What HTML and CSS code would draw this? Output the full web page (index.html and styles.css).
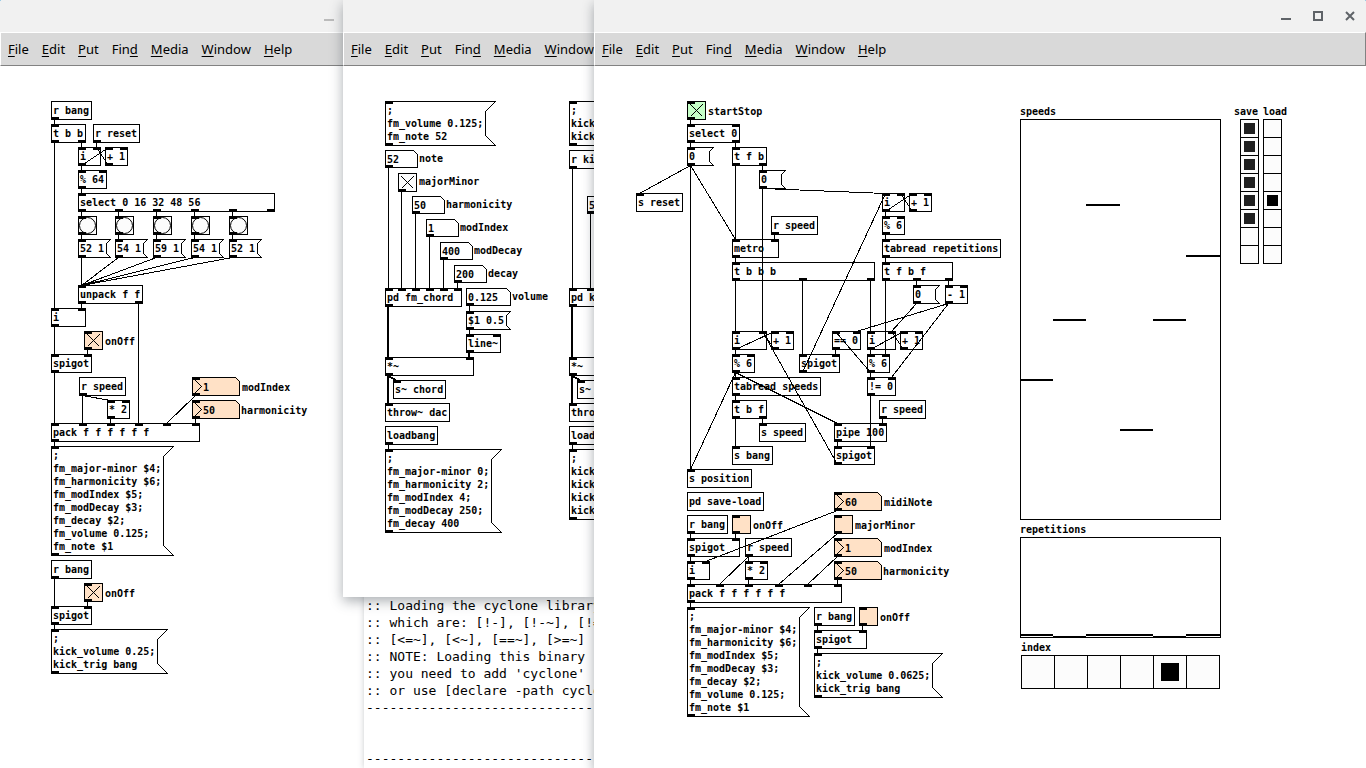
FILE: index.html
```html
<!DOCTYPE html>
<html lang="en">
<head>
<meta charset="utf-8">
<title>Pd patches</title>
<link rel="stylesheet" href="styles.css">
</head>
<body>
<main class="desktop">
  <section class="window window-bass" aria-label="Bass patch">
    <header class="titlebar">
      <button class="win-btn" aria-label="Minimize"><svg viewBox="0 0 32 32"><path d="M11 19h10v2H11z"/></svg></button>
      <span class="win-gap"></span>
    </header>
    <nav class="menubar">
      <button><u>F</u>ile</button><button><u>E</u>dit</button><button><u>P</u>ut</button><button>Fin<u>d</u></button><button><u>M</u>edia</button><button><u>W</u>indow</button><button><u>H</u>elp</button>
    </nav>
    <div class="canvas" data-patch="bass"></div>
  </section>

  <section class="window window-console" aria-label="Pd console">
    <pre class="log">:: Loading the cyclone library
:: which are: [!-], [!-~], [!=~]
:: [&lt;=~], [&lt;~], [==~], [&gt;=~]
:: NOTE: Loading this binary
:: you need to add 'cyclone'
:: or use [declare -path cyclone]
---------------------------------


---------------------------------</pre>
  </section>

  <section class="window window-voices" aria-label="Voices patch">
    <header class="titlebar"></header>
    <nav class="menubar">
      <button><u>F</u>ile</button><button><u>E</u>dit</button><button><u>P</u>ut</button><button>Fin<u>d</u></button><button><u>M</u>edia</button><button><u>W</u>indow</button>
    </nav>
    <div class="canvas" data-patch="voices"></div>
  </section>

  <section class="window window-main" aria-label="Sequencer patch">
    <header class="titlebar">
      <button class="win-btn" aria-label="Minimize"><svg viewBox="0 0 32 32"><path d="M11 18h10v2H11z"/></svg></button>
      <button class="win-btn" aria-label="Maximize"><svg viewBox="0 0 32 32"><path d="M13 11h10v10H13zM15 13v6h6v-6z" transform="translate(-2)" fill-rule="evenodd"/></svg></button>
      <button class="win-btn" aria-label="Close"><svg viewBox="0 0 32 32"><path class="cross" d="M12 12l8 8M20 12l-8 8"/></svg></button>
    </header>
    <nav class="menubar">
      <button><u>F</u>ile</button><button><u>E</u>dit</button><button><u>P</u>ut</button><button>Fin<u>d</u></button><button><u>M</u>edia</button><button><u>W</u>indow</button><button><u>H</u>elp</button>
    </nav>
    <div class="canvas" data-patch="main"></div>
  </section>
</main>
<script src="patch.js"></script>
</body>
</html>
```

FILE: styles.css
```css
* { box-sizing: border-box; }

body {
  margin: 0;
  background: #2f9fd8;
  font-family: "Noto Sans", sans-serif;
  font-size: 13px;
  color: #000;
}

button, input {
  margin: 0;
  padding: 0;
  border: 0;
  border-radius: 0;
  background: none;
  color: inherit;
  font: inherit;
  appearance: none;
}

.desktop {
  position: relative;
  height: 100vh;
  overflow: hidden;
}

.window {
  position: absolute;
  top: 0;
  bottom: 0;
  display: flex;
  flex-direction: column;
  background: #fff;
  box-shadow: 0 4px 12px rgba(40, 50, 60, 0.4);
}

.window-bass { left: 0; width: 409px; border-top-left-radius: 2px; }
.window-console { left: 364px; width: 230px; top: 590px; box-shadow: 0 0 6px rgba(40, 50, 60, 0.25); }
.window-voices { left: 343px; width: 251px; bottom: auto; height: 597px; }
.window-main { left: 594px; right: 0; border-top-right-radius: 2px; }

.titlebar {
  display: flex;
  justify-content: flex-end;
  height: 32px;
  flex: none;
  background: #f1f1f1;
  border-radius: inherit;
}

.win-btn { width: 32px; height: 32px; }
.win-btn svg { display: block; fill: #5f6368; }
.win-btn .cross { fill: none; stroke: #5f6368; stroke-width: 2; }
.win-gap { width: 64px; }
.window-bass .win-btn svg { fill: #bbb; }

.menubar {
  display: flex;
  align-items: center;
  gap: 13px;
  height: 34px;
  flex: none;
  padding-left: 7px;
  overflow: hidden;
  background: #d9d9d9;
  border: 1px solid #fff;
  border-right-color: #828282;
  border-bottom-color: #828282;
}

.window-voices .menubar { border-right: 0; }
.menubar button { flex: none; line-height: 18px; }
.menubar u { text-underline-offset: 2px; text-decoration-thickness: 1px; text-decoration-skip-ink: none; }

.log {
  margin: 0;
  padding: 7px 2px;
  font: 13px/17px "DejaVu Sans Mono", monospace;
  overflow: hidden;
}

.canvas {
  position: relative;
  flex: 1;
  overflow: hidden;
  font: bold 10px/13px "DejaVu Sans Mono", monospace;
}

.node { position: absolute; }
.box, .message { padding: 3px 2px; text-align: left; white-space: pre; }
.message { display: block; }
.atom { height: 18px; padding: 3px 2px 2px; }
.number { height: 19px; padding: 4px 2px 2px 11px; clip-path: polygon(0 0, calc(100% - 4px) 0, 100% 4px, 100% 100%, 0 100%); }
.toggle, .bang { width: 19px; height: 19px; background: #fcfcfc; }
.peach { background: #ffe1c6; }
.green { background: #c6ffc7; }
.caption { white-space: nowrap; }

.wires {
  position: absolute;
  inset: 0;
  width: 100%;
  height: 100%;
  pointer-events: none;
  fill: none;
  stroke: #000;
  shape-rendering: crispEdges;
}

.wires .solid { fill: #000; stroke: none; }
.wires .signal { stroke-width: 2; }
.wires .round { shape-rendering: auto; }

.radio { display: flex; border: 1px solid #000; }
.radio input { display: block; background: #fcfcfc; border: 0 solid #000; }
.radio-column { flex-direction: column; width: 19px; }
.radio-column input { height: 18px; padding: 3px; border-bottom-width: 1px; }
.radio-column input:last-child { height: 17px; border-bottom-width: 0; }
.radio-row { height: 34px; }
.radio-row input { width: 33px; padding: 7px; border-right-width: 1px; }
.radio-row input:last-child { width: 32px; border-right-width: 0; }
.radio input:checked::before { content: ""; display: block; background: #000; }
.radio-column input:checked::before { width: 11px; height: 11px; }
.radio-row input:checked::before { width: 18px; height: 18px; }
.radio input[type="checkbox"]:checked::before { background: #202020; }
```

FILE: patch.js
```js
// Node: [id, type, x, y, text, inlets, outlets, options]
// Cord: "from.outlet>to.inlet"; a leading "~" marks a signal cord.
const FM = ";\nfm_major-minor $4;\nfm_harmonicity $6;\nfm_modIndex $5;\nfm_modDecay $3;\nfm_decay $2;\nfm_volume 0.125;\nfm_note $1";

const patches = {
  bass: {
    origin: [0, 66],
    nodes: [
      ["rb", "box", 51, 101, "r bang", 0, 1],
      ["tbb", "box", 51, 124, "t b b", 1, 2],
      ["rr", "box", 93, 124, "r reset", 0, 1],
      ["i", "box", 78, 147, "i", 2, 1, { w: 23 }],
      ["inc", "box", 105, 147, "+ 1", 2, 1],
      ["mod", "box", 78, 170, "% 64", 2, 1],
      ["sel", "box", 78, 193, "select 0 16 32 48 56", 1, 6, { w: 197 }],
      ["b0", "bang", 78, 216, "", 1, 1],
      ["b1", "bang", 115, 216, "", 1, 1],
      ["b2", "bang", 153, 216, "", 1, 1],
      ["b3", "bang", 191, 216, "", 1, 1],
      ["b4", "bang", 229, 216, "", 1, 1],
      ["m0", "message", 78, 239, "52 1", 1, 1],
      ["m1", "message", 115, 239, "54 1", 1, 1],
      ["m2", "message", 153, 239, "59 1", 1, 1],
      ["m3", "message", 191, 239, "54 1", 1, 1],
      ["m4", "message", 229, 239, "52 1", 1, 1],
      ["un", "box", 78, 285, "unpack f f", 1, 2],
      ["j", "box", 51, 308, "i", 2, 1, { w: 35 }],
      ["on", "toggle", 84, 331, "", 1, 1, { on: true, fill: "peach", label: "onOff", lx: 105 }],
      ["sp", "box", 51, 354, "spigot", 2, 1],
      ["rs", "box", 79, 377, "r speed", 0, 1],
      ["dbl", "box", 107, 400, "* 2", 2, 1],
      ["mi", "number", 192, 377, "1", 1, 1, { label: "modIndex", lx: 242 }],
      ["ha", "number", 192, 400, "50", 1, 1, { label: "harmonicity", lx: 241 }],
      ["pk", "box", 51, 423, "pack f f f f f f", 6, 1, { w: 149 }],
      ["fm", "message", 51, 446, FM, 1, 1],
      ["rb2", "box", 51, 560, "r bang", 0, 1],
      ["on2", "toggle", 84, 583, "", 1, 1, { on: true, fill: "peach", label: "onOff", lx: 105 }],
      ["sp2", "box", 51, 606, "spigot", 2, 1],
      ["kick", "message", 51, 629, ";\nkick_volume 0.25;\nkick_trig bang", 1, 1]
    ],
    cords: "rb.0>tbb.0 tbb.0>j.0 tbb.1>i.0 rr.0>i.1 i.0>inc.0 inc.0>i.1 i.0>mod.0 mod.0>sel.0 sel.0>b0.0 sel.1>b1.0 sel.2>b2.0 sel.3>b3.0 sel.4>b4.0 b0.0>m0.0 b1.0>m1.0 b2.0>m2.0 b3.0>m3.0 b4.0>m4.0 m0.0>un.0 m1.0>un.0 m2.0>un.0 m3.0>un.0 m4.0>un.0 un.0>j.1 un.1>pk.3 j.0>sp.0 on.0>sp.1 sp.0>pk.0 rs.0>pk.1 rs.0>dbl.0 dbl.0>pk.2 mi.0>pk.4 ha.0>pk.5 pk.0>fm.0 rb2.0>sp2.0 on2.0>sp2.1 sp2.0>kick.0"
  },

  voices: {
    origin: [343, 66],
    nodes: [
      ["vol", "message", 385, 101, ";\nfm_volume 0.125;\nfm_note 52", 1, 1],
      ["n", "atom", 385, 150, "52", 0, 1, { label: "note", lx: 419 }],
      ["mm", "toggle", 398, 173, "", 0, 1, { on: true, label: "majorMinor", lx: 419, ly: 175 }],
      ["h", "atom", 412, 196, "50", 0, 1, { label: "harmonicity", lx: 446 }],
      ["mi", "atom", 426, 219, "1", 0, 1, { label: "modIndex", lx: 460 }],
      ["md", "atom", 440, 242, "400", 0, 1, { label: "modDecay", lx: 474 }],
      ["d", "atom", 454, 265, "200", 0, 1, { label: "decay", lx: 488 }],
      ["pd", "box", 385, 288, "pd fm_chord", 6, 1, { w: 77 }],
      ["v", "atom", 466, 288, "0.125", 0, 1, { w: 45, label: "volume", lx: 512 }],
      ["ramp", "message", 466, 311, "$1 0.5", 1, 1],
      ["line", "box", 466, 334, "line~", 2, 1],
      ["mul", "box", 385, 357, "*~", 2, 1, { w: 89 }],
      ["s", "box", 393, 380, "s~ chord", 1, 0],
      ["th", "box", 385, 403, "throw~ dac", 1, 0],
      ["lb", "box", 385, 426, "loadbang", 0, 1],
      ["init", "message", 385, 449, ";\nfm_major-minor 0;\nfm_harmonicity 2;\nfm_modIndex 4;\nfm_modDecay 250;\nfm_decay 400", 1, 1],
      ["kvol", "message", 569, 101, ";\nkick_volume 0.25;\nkick_trig bang", 1, 1],
      ["rk", "box", 569, 150, "r kick_trig", 0, 1],
      ["ka", "atom", 587, 196, "50", 0, 1],
      ["kpd", "box", 569, 288, "pd kick", 2, 1, { w: 26 }],
      ["kmul", "box", 569, 357, "*~", 2, 1, { w: 89 }],
      ["ks", "box", 577, 380, "s~ kick", 1, 0],
      ["kth", "box", 569, 403, "throw~ dac", 1, 0],
      ["klb", "box", 569, 426, "loadbang", 0, 1],
      ["kinit", "message", 569, 449, ";\nkick_freq 50;\nkick_decay 200;\nkick_click 1;\nkick_volume 1", 1, 1]
    ],
    cords: "n.0>pd.0 mm.0>pd.1 h.0>pd.2 mi.0>pd.3 md.0>pd.4 d.0>pd.5 v.0>ramp.0 ramp.0>line.0 ~pd.0>mul.0 ~line.0>mul.1 ~mul.0>s.0 ~mul.0>th.0 lb.0>init.0 rk.0>kpd.0 ka.0>kpd.1 ~kpd.0>kmul.0 ~kmul.0>ks.0 ~kmul.0>kth.0 klb.0>kinit.0"
  },

  main: {
    origin: [594, 66],
    nodes: [
      ["go", "toggle", 687, 101, "", 1, 1, { on: true, fill: "green", label: "startStop", lx: 708 }],
      ["sel", "box", 687, 124, "select 0", 2, 2],
      ["z0", "message", 687, 147, "0", 1, 1, { w: 23 }],
      ["tfb", "box", 732, 147, "t f b", 1, 2],
      ["z1", "message", 759, 170, "0", 1, 1, { w: 23 }],
      ["sr", "box", 636, 193, "s reset", 1, 0],
      ["i1", "box", 882, 193, "i", 2, 1, { w: 23 }],
      ["p1", "box", 909, 193, "+ 1", 2, 1],
      ["rs1", "box", 771, 216, "r speed", 0, 1],
      ["q1", "box", 882, 216, "% 6", 2, 1],
      ["met", "box", 732, 239, "metro", 2, 1, { w: 47 }],
      ["tr", "box", 882, 239, "tabread repetitions", 1, 1],
      ["tbbb", "box", 732, 262, "t b b b", 1, 3, { w: 143 }],
      ["tfbf", "box", 882, 262, "t f b f", 1, 3, { w: 71 }],
      ["z2", "message", 913, 285, "0", 1, 1, { w: 23 }],
      ["dec", "box", 945, 285, "- 1", 2, 1],
      ["i2", "box", 732, 331, "i", 2, 1, { w: 35 }],
      ["p2", "box", 771, 331, "+ 1", 2, 1],
      ["eq", "box", 832, 331, "== 0", 2, 1],
      ["i3", "box", 867, 331, "i", 2, 1, { w: 29 }],
      ["p3", "box", 900, 331, "+ 1", 2, 1],
      ["q2", "box", 732, 354, "% 6", 2, 1],
      ["spa", "box", 799, 354, "spigot", 2, 1],
      ["q3", "box", 867, 354, "% 6", 2, 1],
      ["ts", "box", 732, 377, "tabread speeds", 1, 1],
      ["ne", "box", 867, 377, "!= 0", 2, 1],
      ["tbf", "box", 732, 400, "t b f", 1, 2],
      ["rs2", "box", 879, 400, "r speed", 0, 1],
      ["ss", "box", 759, 423, "s speed", 1, 0],
      ["pipe", "box", 834, 423, "pipe 100", 2, 1],
      ["sb", "box", 732, 446, "s bang", 1, 0],
      ["spb", "box", 834, 446, "spigot", 2, 1],
      ["pos", "box", 687, 469, "s position", 1, 0],
      ["sl", "box", 687, 492, "pd save-load", 0, 0],
      ["mn", "number", 834, 492, "60", 1, 1, { label: "midiNote", lx: 884 }],
      ["rb", "box", 687, 515, "r bang", 0, 1],
      ["on", "toggle", 732, 515, "", 1, 1, { fill: "peach", label: "onOff", lx: 753 }],
      ["mm", "toggle", 834, 515, "", 1, 1, { fill: "peach", label: "majorMinor", lx: 855 }],
      ["spc", "box", 687, 538, "spigot", 2, 1, { w: 53 }],
      ["rs3", "box", 745, 538, "r speed", 0, 1],
      ["mi", "number", 834, 538, "1", 1, 1, { label: "modIndex", lx: 884 }],
      ["i4", "box", 687, 561, "i", 2, 1, { w: 23 }],
      ["dbl", "box", 745, 561, "* 2", 2, 1],
      ["ha", "number", 834, 561, "50", 1, 1, { label: "harmonicity", lx: 883 }],
      ["pk", "box", 687, 584, "pack f f f f f f", 6, 1, { w: 155 }],
      ["fm", "message", 687, 607, FM, 1, 1],
      ["rb2", "box", 814, 607, "r bang", 0, 1],
      ["on2", "toggle", 859, 607, "", 1, 1, { fill: "peach", label: "onOff", lx: 880 }],
      ["spd", "box", 814, 630, "spigot", 2, 1, { w: 53 }],
      ["kick", "message", 814, 653, ";\nkick_volume 0.0625;\nkick_trig bang", 1, 1]
    ],
    cords: "go.0>sel.0 sel.0>z0.0 sel.1>tfb.0 z0.0>sr.0 z0.0>met.0 z0.0>pos.0 tfb.0>met.0 tfb.1>z1.0 z1.0>i1.0 z1.0>i2.1 rs1.0>met.1 met.0>tbbb.0 tbbb.0>i2.0 tbbb.1>spa.0 tbbb.2>i3.0 i1.0>p1.0 p1.0>i1.1 i1.0>q1.0 q1.0>tr.0 tr.0>tfbf.0 tfbf.0>q3.1 tfbf.1>z2.0 tfbf.2>dec.0 z2.0>i3.1 dec.0>eq.1 dec.0>ne.1 spa.0>i1.0 eq.0>spa.1 i3.0>p3.0 p3.0>i3.1 i3.0>q3.0 q3.0>eq.0 q3.0>ne.0 ne.0>spb.1 i2.0>p2.0 p2.0>i2.1 i2.0>q2.0 q2.0>ts.0 q2.0>pos.0 q2.0>pipe.0 ts.0>tbf.0 tbf.0>sb.0 tbf.1>ss.0 rs2.0>pipe.1 pipe.0>spb.0 spb.0>i2.1 rb.0>spc.0 on.0>spc.1 spc.0>i4.0 mn.0>i4.1 i4.0>pk.0 rs3.0>dbl.0 rs3.0>pk.1 dbl.0>pk.2 mm.0>pk.3 mi.0>pk.4 ha.0>pk.5 pk.0>fm.0 rb2.0>spd.0 on2.0>spd.1 spd.0>kick.0",
    arrays: [
      { name: "speeds", x: 1020, y: 119, w: 200, h: 400, values: [260, 200, 85, 310, 200, 136] },
      { name: "repetitions", x: 1020, y: 537, w: 200, h: 100, values: [97, 99, 97, 97, 99, 97] }
    ],
    radios: [
      { name: "save", kind: "checkbox", dir: "column", x: 1240, y: 119, lx: 1234, ly: 105, count: 8, on: [0, 1, 2, 3, 4, 5] },
      { name: "load", kind: "radio", dir: "column", x: 1263, y: 119, lx: 1263, ly: 105, count: 8, on: [4] },
      { name: "index", kind: "radio", dir: "row", x: 1021, y: 655, lx: 1021, ly: 641, count: 6, on: [4] }
    ]
  }
};

const IO_WIDTH = 7;

function drawPatch(canvas, name, patch) {
  const [ox, oy] = patch.origin;
  const byId = {};
  const shapes = [];

  function place(tag, className, x, y) {
    const el = document.createElement(tag);
    el.className = "node " + className;
    el.style.left = x - ox + "px";
    el.style.top = y - oy + "px";
    canvas.append(el);
    return el;
  }

  function caption(text, x, y, target) {
    const el = place(target ? "label" : "span", "caption", x, y);
    if (target) el.htmlFor = target;
    el.textContent = text;
  }

  const path = (d, cls = "") => shapes.push(`<path class="${cls}" d="${d}"/>`);
  const portX = (node, i, count) =>
    node.x + (count > 1 ? Math.floor((node.w - 1 - IO_WIDTH) * i / (count - 1)) : 0);

  for (const [id, type, x, y, text, ins, outs, opt = {}] of patch.nodes) {
    const lines = text.split("\n");
    const longest = Math.max(...lines.map(line => line.length));
    const widths = { toggle: 19, bang: 19, number: 48, atom: 33 };
    const w = opt.w || widths[type] || longest * 6 + 5;
    const h = type === "atom" ? 18 : lines.length * 13 + 6;
    const r = x + w - 1;
    const b = y + h - 1;
    const node = byId[id] = { x, y, w, b, ins, outs };
    const tags = { box: "div", message: "button", bang: "button", toggle: "input", number: "input", atom: "input" };
    const fill = type === "number" ? "peach" : opt.fill || "";
    const el = place(tags[type], `${type} ${fill}`, x, y);
    el.id = `${name}-${id}`;
    el.style.width = w + "px";

    if (type === "box" || type === "message") {
      el.textContent = text;
    } else if (type === "toggle") {
      el.type = "checkbox";
      el.checked = Boolean(opt.on);
    } else if (type === "bang") {
      el.setAttribute("aria-label", "bang");
    } else {
      el.type = "text";
      el.value = text;
      if (!opt.label) el.setAttribute("aria-label", "value");
    }

    if (type === "message") {
      const c = Math.min(10, Math.floor((h - 1) / 4));
      path(`M${x} ${y}H${r + c}L${r} ${y + c}V${b - c}L${r + c} ${b}H${x}Z`);
    } else if (type === "atom" || type === "number") {
      path(`M${x} ${y}H${r - 4}L${r} ${y + 4}V${b}H${x}Z`);
      if (type === "number") path(`M${x} ${y}L${x + 9} ${y + 9}L${x} ${b}`);
    } else {
      path(`M${x} ${y}H${r}V${b}H${x}Z`);
    }
    if (type === "toggle" && opt.on) {
      path(`M${x + 3} ${y + 3}L${r - 3} ${b - 3}M${r - 3} ${y + 3}L${x + 3} ${b - 3}`);
    }
    if (type === "bang") {
      shapes.push(`<circle class="round" cx="${x + 9}" cy="${y + 9}" r="8"/>`);
    }

    for (let i = 0; i < ins; i++) path(`M${portX(node, i, ins)} ${y}h8v3h-8z`, "solid port");
    for (let i = 0; i < outs; i++) path(`M${portX(node, i, outs)} ${b - 2}h8v3h-8z`, "solid port");

    if (opt.label) {
      caption(opt.label, opt.lx, opt.ly || y + (type === "atom" ? 2 : 4), el.id);
    }
  }

  for (const cord of patch.cords.split(" ")) {
    const [, signal, from, out, to, inlet] = cord.match(/(~?)(\w+)\.(\d)>(\w+)\.(\d)/);
    const a = byId[from];
    const z = byId[to];
    const x1 = portX(a, +out, a.outs) + 3;
    const x2 = portX(z, +inlet, z.ins) + 3;
    const shift = signal ? 0.5 : 0;
    path(`M${x1 - shift} ${a.b}L${x2 - shift} ${z.y}`, signal ? "signal" : "");
  }

  for (const { name: title, x, y, w, h, values } of patch.arrays || []) {
    path(`M${x} ${y}h${w}v${h}h${-w}z`);
    values.forEach((value, i) => {
      const left = x + Math.floor(w * i / values.length);
      const right = x + Math.floor(w * (i + 1) / values.length);
      path(`M${left} ${y + value}H${right}v2H${left}z`, "solid port");
    });
    caption(title, x, y - 14);
  }

  for (const { name: title, kind, dir, x, y, lx, ly, count, on } of patch.radios || []) {
    const group = place("div", `radio radio-${dir}`, x, y);
    group.setAttribute("role", "group");
    group.setAttribute("aria-label", title);
    for (let i = 0; i < count; i++) {
      const cell = document.createElement("input");
      cell.type = kind;
      cell.name = title;
      cell.checked = on.includes(i);
      cell.setAttribute("aria-label", `${title} ${i}`);
      group.append(cell);
    }
    caption(title, lx, ly);
  }

  canvas.insertAdjacentHTML("beforeend",
    `<svg class="wires" aria-hidden="true"><g transform="translate(${0.5 - ox} ${0.5 - oy})">${shapes.join("")}</g></svg>`);
  canvas.querySelectorAll(".port").forEach(port => port.setAttribute("transform", "translate(-0.5 -0.5)"));
}

for (const canvas of document.querySelectorAll(".canvas")) {
  drawPatch(canvas, canvas.dataset.patch, patches[canvas.dataset.patch]);
}
```
